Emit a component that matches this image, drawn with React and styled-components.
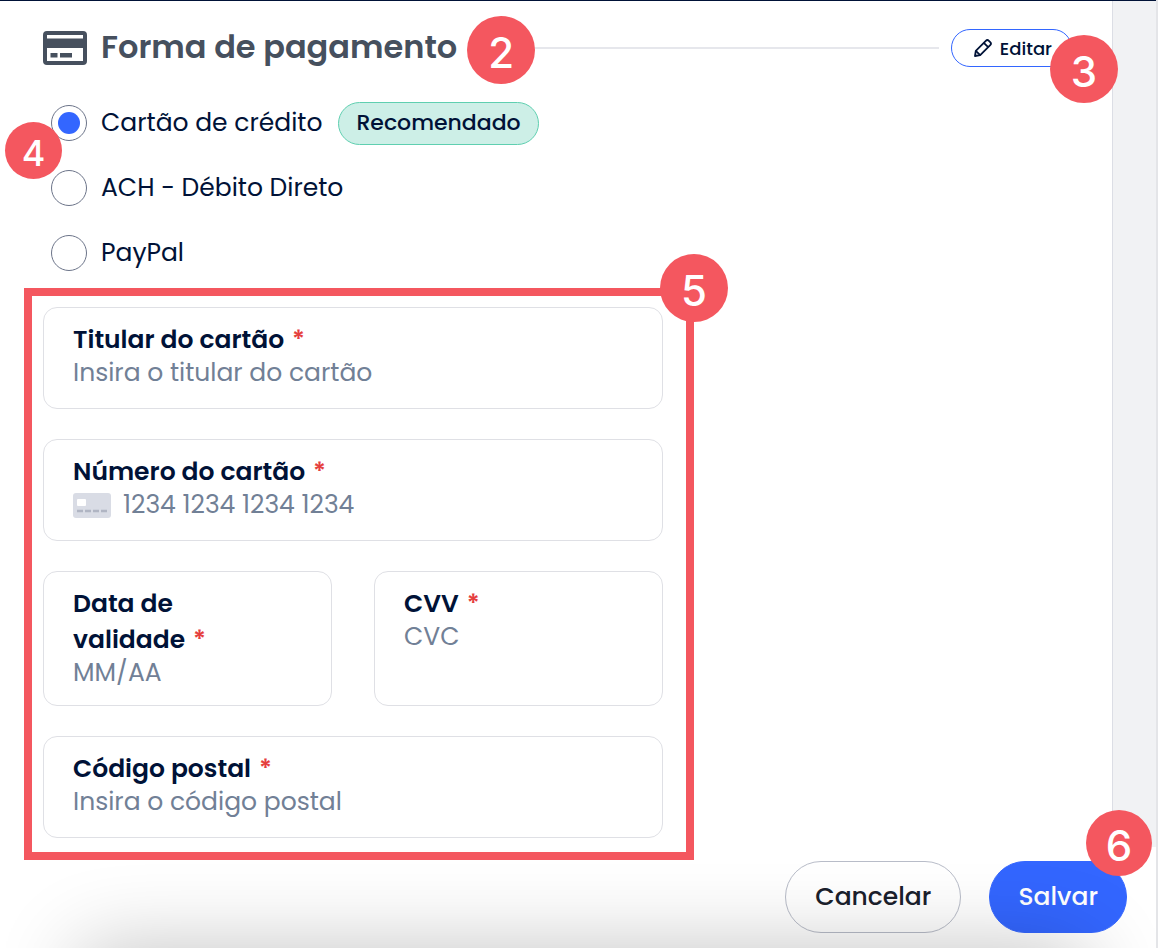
import React, { useState } from 'react'
import styled, { createGlobalStyle } from 'styled-components';

const coral = "#f4575f";
const navy = "#001237";

export const App = () => {

    const [method, setMethod] = useState("card");

    return (
        <Page>
            <GlobalStyle />
            <Content>
                <Main>
                    <Header>
                        <CardIcon />
                        <TitleBox>
                            <Title>Forma de pagamento</Title>
                            <Marker size={68} top={-6} right={-78}>2</Marker>
                        </TitleBox>
                        <Rule />
                        <EditBox>
                            <EditButton type="button">
                                <PencilIcon />
                                Editar
                            </EditButton>
                            <Marker size={68} top={6} right={-46}>3</Marker>
                        </EditBox>
                    </Header>

                    <Methods>
                        <Method>
                            <Radio
                                type="radio"
                                name="method"
                                id="card"
                                checked={method === "card"}
                                onChange={() => setMethod("card")}
                            />
                            <label htmlFor="card">Cartão de crédito</label>
                            <Tag>Recomendado</Tag>
                            <Marker size={57} top={20} left={-46} small>4</Marker>
                        </Method>
                        <Method>
                            <Radio
                                type="radio"
                                name="method"
                                id="ach"
                                checked={method === "ach"}
                                onChange={() => setMethod("ach")}
                            />
                            <label htmlFor="ach">ACH - Débito Direto</label>
                        </Method>
                        <Method>
                            <Radio
                                type="radio"
                                name="method"
                                id="paypal"
                                checked={method === "paypal"}
                                onChange={() => setMethod("paypal")}
                            />
                            <label htmlFor="paypal">PayPal</label>
                        </Method>
                    </Methods>

                    <CardForm id="card-form">
                        <Marker size={68} top={-42} right={-42}>5</Marker>
                        <Field>
                            <Label htmlFor="holder">Titular do cartão <Star>*</Star></Label>
                            <Input id="holder" placeholder="Insira o titular do cartão" />
                        </Field>
                        <Field>
                            <Label htmlFor="number">Número do cartão <Star>*</Star></Label>
                            <InputRow>
                                <SmallCardIcon />
                                <Input id="number" placeholder="1234 1234 1234 1234" />
                            </InputRow>
                        </Field>
                        <Pair>
                            <Field $tight>
                                <Label htmlFor="expiry">Data de<br />validade <Star>*</Star></Label>
                                <Input id="expiry" placeholder="MM/AA" />
                            </Field>
                            <Field $tight>
                                <Label htmlFor="cvc">CVV <Star>*</Star></Label>
                                <Input id="cvc" placeholder="CVC" />
                            </Field>
                        </Pair>
                        <Field>
                            <Label htmlFor="zip">Código postal <Star>*</Star></Label>
                            <Input id="zip" placeholder="Insira o código postal" />
                        </Field>
                    </CardForm>
                </Main>
                <Side />
            </Content>

            <Footer>
                <FooterButton type="button">Cancelar</FooterButton>
                <SaveBox>
                    <FooterButton type="submit" form="card-form" $primary>Salvar</FooterButton>
                    <Marker size={66} top={-51} right={-25}>6</Marker>
                </SaveBox>
            </Footer>
        </Page>
    )
}

const Marker = ({ size, top, left, right, small, children }) => (
    <Dot $size={size} $top={top} $left={left} $right={right} $small={small}>{children}</Dot>
)

const CardIcon = () => (
    <svg width="44" height="34" viewBox="0 0 44 34">
        <rect x="2" y="2" width="40" height="30" rx="2" fill="none" stroke="#46505e" strokeWidth="4" />
        <path d="M2 7.500h40v9.500H2z" fill="#46505e" />
        <path d="M7.500 22h7v4.500h-7zM17 22h12v4.500H17z" fill="#46505e" />
    </svg>
)

const PencilIcon = () => (
    <svg width="18" height="18" viewBox="0 0 18 18" fill="none" stroke={navy} strokeWidth="1.8" strokeLinejoin="round">
        <path d="M1 17l.8-5.200L11.800 1.800a2.200 2.200 0 0 1 3.100 0l1.300 1.300a2.200 2.200 0 0 1 0 3.100L6.200 16.200z" />
        <path d="M9.800 3.800l4.400 4.400M1.800 11.800l4.400 4.400" />
    </svg>
)

const SmallCardIcon = () => (
    <CardGlyph width="38" height="26" viewBox="0 0 38 26">
        <rect width="38" height="25" y="1" rx="3" fill="#d9dce5" />
        <rect x="4" y="7" width="9" height="7" rx="1" fill="#fff" />
        <path d="M4 19h6M12 19h6M20 19h6M28 19h6" stroke="#b0b5c3" strokeWidth="2.400" />
    </CardGlyph>
)

const GlobalStyle = createGlobalStyle`
* {
    box-sizing : border-box;
}
body {
    margin : 0;
    background : #ffffff;
    color : ${navy};
    font-family : Poppins, Inter, "Open Sans", sans-serif;
}
button, input {
    font-family : inherit;
}
`;

const Page = styled.div`
min-height : 100vh;
display : flex;
flex-direction : column;
border-right : 2px solid #e4e5e8;
overflow : hidden;
`;

const Content = styled.div`
display : flex;
border-top : 1px solid ${navy};
`;

const Main = styled.main`
flex : 1;
min-width : 0;
`;

const Side = styled.aside`
width : 44px;
margin-bottom : 13px;
background : #f1f2f4;
border-left : 1px solid #dcdee5;
`;

const Header = styled.header`
display : flex;
align-items : center;
height : 94px;
padding : 0 40px 0 43px;
`;

const TitleBox = styled.div`
position : relative;
margin-left : 14px;
padding-bottom : 2px;
`;

const Title = styled.h1`
margin : 0;
color : #46505e;
font-size : 32px;
line-height : 50px;
font-weight : 600;
white-space : nowrap;
`;

const Rule = styled.div`
flex : 1;
height : 2px;
margin : 0 12px 0 16px;
background : #e6e7ec;
`;

const EditBox = styled.div`
position : relative;
`;

const EditButton = styled.button`
display : flex;
align-items : center;
gap : 8px;
height : 38px;
padding : 0 19px 0 22px;
background : #ffffff;
border : 1px solid #3366ff;
border-radius : 19px;
color : ${navy};
font-size : 18px;
font-weight : 500;
`;

const Methods = styled.div`
display : flex;
flex-direction : column;
gap : 23px;
padding : 7px 0 14px 51px;
`;

const Method = styled.div`
position : relative;
display : flex;
align-items : center;
height : 42px;
font-size : 25px;
`;

const Radio = styled.input`
appearance : none;
width : 36px;
height : 36px;
margin : 0 14px 0 0;
background : #ffffff;
border : 1px solid #6c7489;
border-radius : 50%;
display : grid;
place-items : center;

&:checked::before {
    content : "";
    width : 22px;
    height : 22px;
    border-radius : 50%;
    background : #3366ff;
}
`;

const Tag = styled.span`
height : 43px;
margin-left : 16px;
padding : 0 17px;
background : #cdefe7;
border : 1px solid #5fcfb0;
border-radius : 22px;
font-size : 22px;
line-height : 40px;
font-weight : 500;
`;

const CardForm = styled.form`
position : relative;
display : flex;
flex-direction : column;
gap : 30px;
max-width : 670px;
margin-left : 24px;
padding : 11px 23px 14px 11px;
border : 8px solid ${coral};
`;

const Field = styled.div`
min-width : 0;
padding : 14px 29px ${(p) => (p.$tight ? 17 : 20)}px;
background : #ffffff;
border : 1px solid #dfe0e5;
border-radius : 14px;
`;

const Pair = styled.div`
display : grid;
grid-template-columns : 1fr 1fr;
gap : 42px;
`;

const Label = styled.label`
display : block;
font-size : 25px;
line-height : 36px;
font-weight : 600;
`;

const Star = styled.span`
margin-left : 2px;
color : #e53e3e;
`;

const InputRow = styled.div`
display : flex;
align-items : center;
gap : 12px;
`;

const CardGlyph = styled.svg`
flex-shrink : 0;
`;

const Input = styled.input`
display : block;
width : 100%;
height : 30px;
padding : 0;
border : 0;
outline : 0;
background : transparent;
color : ${navy};
font-size : 25px;

&::placeholder {
    color : #718096;
    opacity : 1;
}
`;

const Footer = styled.footer`
position : relative;
flex : 1;
display : flex;
justify-content : flex-end;
align-items : flex-start;
gap : 28px;
padding : 1px 29px 15px;

&::after {
    content : "";
    position : absolute;
    left : 80px;
    right : 70px;
    top : 100%;
    height : 100px;
    box-shadow : 0 0 84px rgba(0,0,0,0.24);
    pointer-events : none;
}
`;

const SaveBox = styled.div`
position : relative;
`;

const FooterButton = styled.button`
height : 72px;
padding : 0 ${(p) => (p.$primary ? 28 : 29)}px;
background : ${(p) => (p.$primary ? "#3366ff" : "transparent")};
border : 1px solid ${(p) => (p.$primary ? "#3366ff" : "#b8bcc8")};
border-radius : 36px;
color : ${(p) => (p.$primary ? "#ffffff" : "#1a202c")};
font-size : 25px;
font-weight : 500;
`;

const Dot = styled.span`
position : absolute;
z-index : 2;
top : ${(p) => p.$top}px;
left : ${(p) => (p.$left === undefined ? "auto" : p.$left + "px")};
right : ${(p) => (p.$right === undefined ? "auto" : p.$right + "px")};
display : flex;
align-items : center;
justify-content : center;
width : ${(p) => p.$size}px;
height : ${(p) => p.$size}px;
border-radius : 50%;
background : ${coral};
color : #ffffff;
font-family : Inter, sans-serif;
font-size : ${(p) => (p.$small ? 36 : 42)}px;
font-weight : 500;
padding-top : 4px;
`;

export default App;
